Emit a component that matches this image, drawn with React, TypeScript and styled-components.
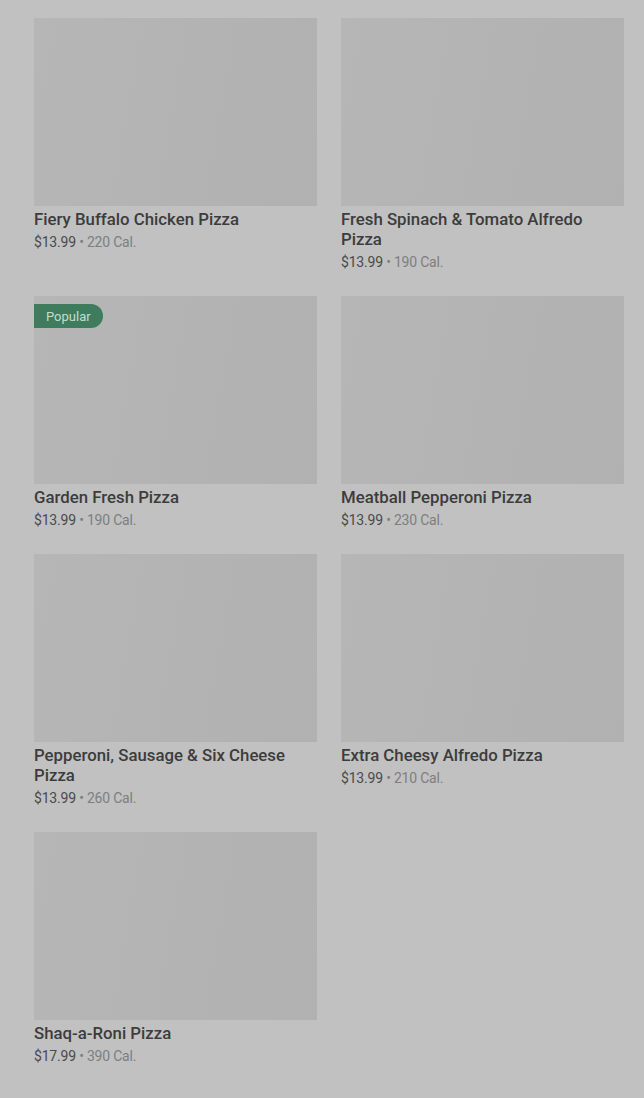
import styled, { createGlobalStyle } from 'styled-components'

const GlobalStyle = createGlobalStyle`
    html,
    body {
        margin: 0;
        padding: 0;
        background-color: #c1c1c1;
    }

    body {
        font-family: Roboto, 'Noto Sans', 'Liberation Sans', sans-serif;
    }
`

const Page = styled.div`
    min-height: 1098px;
    padding: 18px 20px 24px 34px;
    box-sizing: border-box;
    background-color: #c1c1c1;
`

const Grid = styled.div`
    display: grid;
    grid-template-columns: repeat(2, 283px);
    column-gap: 24px;
    row-gap: 24px;
    align-items: start;
`

const Card = styled.div`
    display: flex;
    flex-direction: column;
`

const Picture = styled.div`
    position: relative;
    height: 188px;
    background: linear-gradient(100deg, #b6b6b6 0%, #b3b3b3 55%, #b1b1b1 100%);
`

const Badge = styled.span`
    position: absolute;
    top: 8px;
    left: 0;
    height: 24px;
    padding: 0 12px;
    display: flex;
    align-items: center;
    background-color: #3e7c5d;
    color: #c4dccd;
    font-size: 13px;
    border-radius: 0 12px 12px 0;
`

const Title = styled.div`
    margin-top: 3px;
    font-size: 16.8px;
    line-height: 20px;
    font-weight: 500;
    color: #3c3c3c;
`

const Meta = styled.div`
    margin-top: 3px;
    font-size: 14px;
    line-height: 20px;
    color: #4a4a4a;
    letter-spacing: -0.2px;
`

const Cal = styled.span`
    color: #7e7e7e;
`

type Item = { name: string; price: string; cal: number; popular?: boolean }

const items: Item[] = [
    { name: 'Fiery Buffalo Chicken Pizza', price: '$13.99', cal: 220 },
    { name: 'Fresh Spinach & Tomato Alfredo Pizza', price: '$13.99', cal: 190 },
    { name: 'Garden Fresh Pizza', price: '$13.99', cal: 190, popular: true },
    { name: 'Meatball Pepperoni Pizza', price: '$13.99', cal: 230 },
    { name: 'Pepperoni, Sausage & Six Cheese Pizza', price: '$13.99', cal: 260 },
    { name: 'Extra Cheesy Alfredo Pizza', price: '$13.99', cal: 210 },
    { name: 'Shaq-a-Roni Pizza', price: '$17.99', cal: 390 },
]

const App = () => {
    return (
        <>
            <GlobalStyle />
            <Page>
                <Grid>
                    {items.map((item) => (
                        <Card key={item.name}>
                            <Picture>{item.popular && <Badge>Popular</Badge>}</Picture>
                            <Title>{item.name}</Title>
                            <Meta>
                                {item.price} <Cal>• {item.cal} Cal.</Cal>
                            </Meta>
                        </Card>
                    ))}
                </Grid>
            </Page>
        </>
    )
}

export default App
